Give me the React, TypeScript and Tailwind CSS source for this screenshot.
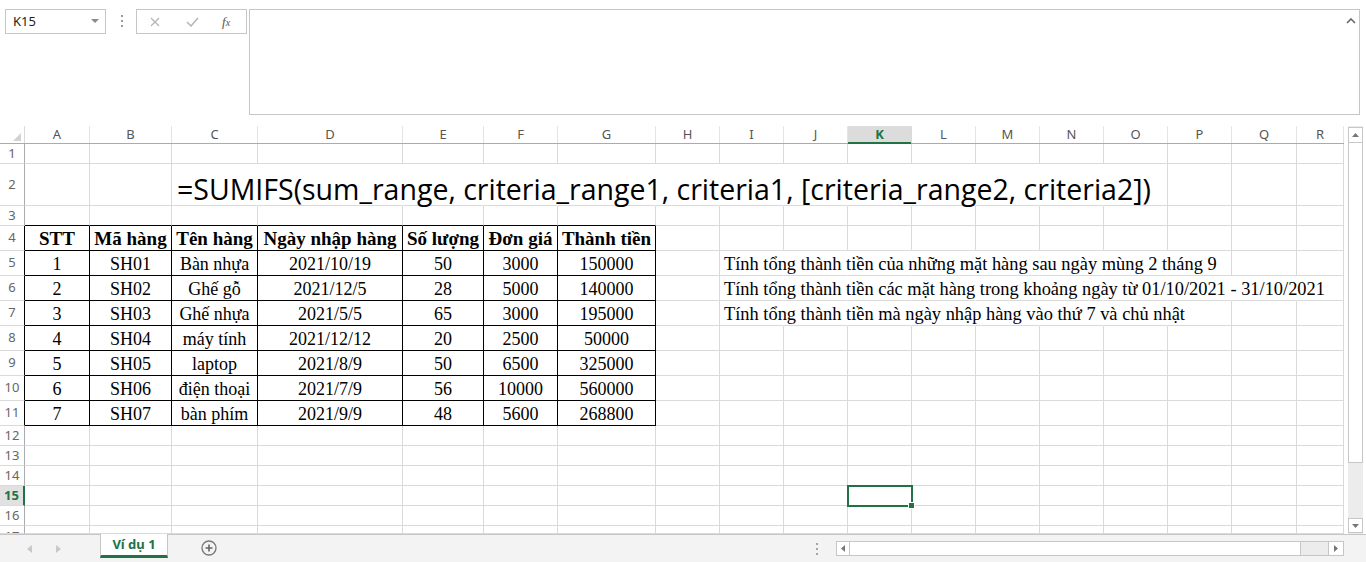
import React from "react";

const COLS: [string, number][] = [
  ["A", 65], ["B", 82], ["C", 86], ["D", 145], ["E", 81], ["F", 74], ["G", 98],
  ["H", 64], ["I", 64], ["J", 64], ["K", 64], ["L", 64], ["M", 64], ["N", 64],
  ["O", 64], ["P", 64], ["Q", 65], ["R", 47],
];
const ROW_H = [20, 42, 20, 25, 25, 25, 25, 25, 25, 25, 25, 20, 20, 20, 20, 20, 8];

const TABLE = [
  ["STT", "Mã hàng", "Tên hàng", "Ngày nhập hàng", "Số lượng", "Đơn giá", "Thành tiền"],
  ["1", "SH01", "Bàn nhựa", "2021/10/19", "50", "3000", "150000"],
  ["2", "SH02", "Ghế gỗ", "2021/12/5", "28", "5000", "140000"],
  ["3", "SH03", "Ghế nhựa", "2021/5/5", "65", "3000", "195000"],
  ["4", "SH04", "máy tính", "2021/12/12", "20", "2500", "50000"],
  ["5", "SH05", "laptop", "2021/8/9", "50", "6500", "325000"],
  ["6", "SH06", "điện thoại", "2021/7/9", "56", "10000", "560000"],
  ["7", "SH07", "bàn phím", "2021/9/9", "48", "5600", "268800"],
];

const NOTES: Record<number, string> = {
  4: "Tính tổng thành tiền của những mặt hàng sau ngày mùng 2 tháng 9",
  5: "Tính tổng thành tiền các mặt hàng trong khoảng ngày từ 01/10/2021 - 31/10/2021",
  6: "Tính tổng thành tiền mà ngày nhập hàng vào thứ 7 và chủ nhật",
};

const HIDE: Record<number, [number, number]> = {
  1: [2, 13],
  4: [8, 14],
  5: [8, 16],
  6: [8, 14],
};

const SEL_ROW = 14;
const SEL_COL = 10;

const SERIF = '"Liberation Serif", "Times New Roman", serif';
const UI = '"Noto Sans", "Open Sans", sans-serif';

function Cell({ r, c, w, h }: { r: number; c: number; w: number; h: number }) {
  const inTable = r >= 3 && r <= 10 && c <= 6;
  const topOfTable = r === 2 && c <= 6;
  const hidden = HIDE[r] && c >= HIDE[r][0] && c <= HIDE[r][1];
  const rightCls = inTable
    ? "border-r-black"
    : hidden
    ? "border-r-transparent"
    : "border-r-[#dadada]";
  const bottomCls = inTable || topOfTable ? "border-b-black" : "border-b-[#dadada]";

  let content: React.ReactNode = null;
  if (inTable) {
    const txt = TABLE[r - 3][c];
    content = (
      <div
        className={
          "w-full text-center whitespace-nowrap leading-[20px] pb-[1px] text-black " +
          (r === 3 ? "font-bold text-[19px]" : "text-[18px]")
        }
        style={{ fontFamily: SERIF }}
      >
        {txt}
      </div>
    );
  } else if (r === 1 && c === 2) {
    content = (
      <div
        className="relative z-10 pl-[5px] pb-[1px] whitespace-nowrap text-[28.5px] leading-[30px] text-black"
        style={{ fontFamily: '"Open Sans", "Noto Sans", sans-serif' }}
      >
        =SUMIFS(sum_range, criteria_range1, criteria1, [criteria_range2, criteria2])
      </div>
    );
  } else if (c === 8 && NOTES[r]) {
    content = (
      <div
        className="relative z-10 pl-[4px] whitespace-nowrap text-[18.4px] leading-[20px] pb-[1px] text-black"
        style={{ fontFamily: SERIF }}
      >
        {NOTES[r]}
      </div>
    );
  }

  const isSel = r === SEL_ROW && c === SEL_COL;

  return (
    <div
      className={"relative flex items-end shrink-0 border-r border-b border-solid " + rightCls + " " + bottomCls}
      style={{ width: w, height: h }}
    >
      {content}
      {isSel && (
        <div className="absolute -left-[1px] -top-[1px] w-[66px] h-[22px] border-2 border-[#217346] z-20">
          <div className="absolute -right-[4px] -bottom-[4px] w-[7px] h-[7px] bg-[#217346] border border-white" />
        </div>
      )}
    </div>
  );
}

function RowHeader({ r, h }: { r: number; h: number }) {
  const sel = r === SEL_ROW;
  const tbl = r >= 3 && r <= 10;
  return (
    <div
      className={
        "w-[25px] shrink-0 flex items-center justify-center overflow-hidden border-b border-[#dadada] text-[13px] " +
        (sel
          ? "bg-[#e1e1e1] text-[#217346] font-bold border-r-2 border-r-[#217346]"
          : tbl
          ? "text-[#666] border-r border-r-black"
          : "text-[#666] border-r border-r-[#ababab]")
      }
      style={{ height: h, fontFamily: UI }}
    >
      <span className={r === 16 ? "mt-[14px]" : ""}>{r + 1}</span>
    </div>
  );
}

function TopBar() {
  return (
    <div className="h-[126px] flex items-start bg-white shrink-0">
      <div className="ml-[5px] mt-[9px] w-[101px] h-[25px] border border-[#c6c6c6] flex items-center justify-between pl-[7px] pr-[6px]">
        <span className="text-[13px] text-[#222]" style={{ fontFamily: UI }}>K15</span>
        <svg width="8" height="5" viewBox="0 0 8 5"><path d="M0 0 L8 0 L4 4 Z" fill="#8a8a8a" /></svg>
      </div>
      <div className="ml-[15px] mt-[15px] flex flex-col gap-[3px]">
        <div className="w-[2px] h-[2px] bg-[#9a9a9a]" />
        <div className="w-[2px] h-[2px] bg-[#9a9a9a]" />
        <div className="w-[2px] h-[2px] bg-[#9a9a9a]" />
      </div>
      <div className="ml-[13px] mt-[9px] w-[111px] h-[25px] border border-[#c6c6c6] flex items-center">
        <svg className="ml-[13px]" width="10" height="10" viewBox="0 0 10 10">
          <path d="M1 1 L9 9 M9 1 L1 9" stroke="#b5b5b5" strokeWidth="1.3" />
        </svg>
        <svg className="ml-[26px]" width="13" height="10" viewBox="0 0 13 10">
          <path d="M1 5 L5 9 L12 1" stroke="#b5b5b5" strokeWidth="1.5" fill="none" />
        </svg>
        <span className="ml-[23px] italic text-[13px] text-[#555]" style={{ fontFamily: SERIF }}>
          f<span className="text-[10px]">x</span>
        </span>
      </div>
      <div className="ml-[2px] mt-[9px] w-[1111px] h-[106px] border border-[#c6c6c6] flex justify-end">
        <svg className="mt-[8px] mr-[3px]" width="10" height="6" viewBox="0 0 10 6">
          <path d="M1 5 L5 1 L9 5" stroke="#666" strokeWidth="1.6" fill="none" />
        </svg>
      </div>
    </div>
  );
}

function ColHeader() {
  return (
    <div className="h-[18px] flex shrink-0 border-b border-[#ababab] bg-white">
      <div className="w-[25px] shrink-0 border-r border-[#dadada] flex items-end justify-end pr-[3px] pb-[2px]">
        <svg width="8" height="8" viewBox="0 0 8 8"><path d="M8 0 L8 8 L0 8 Z" fill="#d2d2d2" /></svg>
      </div>
      {COLS.map(([l, w], i) => {
        const sel = i === SEL_COL;
        return (
          <div
            key={l}
            className={
              "relative shrink-0 flex items-center justify-center text-[13px] leading-[17px] border-r " +
              (sel ? "bg-[#dcdcdc] text-[#217346] font-bold border-r-[#dadada]" : "text-[#555] border-r-[#e4e4e4]")
            }
            style={{ width: w, fontFamily: UI }}
          >
            {l}
            {sel && <div className="absolute left-0 right-0 -bottom-[1px] h-[2px] bg-[#217346]" />}
          </div>
        );
      })}
    </div>
  );
}

function VScroll() {
  return (
    <div className="w-[22px] shrink-0 bg-white flex justify-start pl-[4px]">
      <div className="w-[15px] h-full flex flex-col bg-[#ececec]">
        <div className="h-[16px] mt-[1px] bg-white border border-[#c6c6c6] flex items-center justify-center">
          <svg width="7" height="4" viewBox="0 0 7 4"><path d="M0 4 L3.5 0 L7 4 Z" fill="#777" /></svg>
        </div>
        <div className="h-[320px] bg-white border border-t-0 border-[#c6c6c6]" />
        <div className="flex-1" />
        <div className="h-[15px] mb-[1px] bg-white border border-[#c6c6c6] flex items-center justify-center">
          <svg width="7" height="4" viewBox="0 0 7 4"><path d="M0 0 L7 0 L3.5 4 Z" fill="#777" /></svg>
        </div>
      </div>
    </div>
  );
}

function BottomBar() {
  return (
    <div className="h-[28px] shrink-0 bg-[#f3f3f3] border-t border-[#c6c6c6] flex items-start">
      <svg className="ml-[27px] mt-[10px]" width="5" height="8" viewBox="0 0 5 8"><path d="M5 0 L0 4 L5 8 Z" fill="#c8c8c8" /></svg>
      <svg className="ml-[24px] mt-[10px]" width="5" height="8" viewBox="0 0 5 8"><path d="M0 0 L5 4 L0 8 Z" fill="#c8c8c8" /></svg>
      <div className="ml-[39px] -mt-[1px] w-[68px] h-[24px] bg-white border-x border-[#c6c6c6] border-b-[3px] border-b-[#217346] flex items-center justify-center">
        <span className="text-[13px] font-bold text-[#217346]" style={{ fontFamily: UI }}>
          Ví dụ 1
        </span>
      </div>
      <svg className="ml-[33px] mt-[5px]" width="16" height="16" viewBox="0 0 16 16">
        <circle cx="8" cy="8" r="7" stroke="#777" strokeWidth="1.3" fill="none" />
        <path d="M8 4.5 V11.5 M4.5 8 H11.5" stroke="#666" strokeWidth="1.6" />
      </svg>
      <div className="ml-[599px] mt-[8px] flex flex-col gap-[3px]">
        <div className="w-[2px] h-[2px] bg-[#a5a5a5]" />
        <div className="w-[2px] h-[2px] bg-[#a5a5a5]" />
        <div className="w-[2px] h-[2px] bg-[#a5a5a5]" />
      </div>
      <div className="ml-[18px] mt-[6px] w-[508px] h-[15px] border border-[#c6c6c6] bg-[#ececec] flex">
        <div className="w-[13px] bg-white flex items-center justify-center border-r border-[#c6c6c6]">
          <svg width="4" height="7" viewBox="0 0 4 7"><path d="M4 0 L0 3.5 L4 7 Z" fill="#777" /></svg>
        </div>
        <div className="w-[451px] bg-white border-r border-[#c6c6c6]" />
        <div className="flex-1" />
        <div className="w-[15px] bg-white flex items-center justify-center border-l border-[#c6c6c6]">
          <svg width="4" height="7" viewBox="0 0 4 7"><path d="M0 0 L4 3.5 L0 7 Z" fill="#777" /></svg>
        </div>
      </div>
    </div>
  );
}

export default function App() {
  return (
    <div className="w-[1366px] h-[562px] overflow-hidden bg-white flex flex-col">
      <TopBar />
      <div className="h-[408px] flex shrink-0 overflow-hidden">
        <div className="w-[1344px] shrink-0 flex flex-col">
          <ColHeader />
          {ROW_H.map((h, r) => (
            <div key={r} className="flex shrink-0" style={{ height: h }}>
              <RowHeader r={r} h={h} />
              {COLS.map(([l, w], c) => (
                <Cell key={l} r={r} c={c} w={w} h={h} />
              ))}
            </div>
          ))}
        </div>
        <VScroll />
      </div>
      <BottomBar />
    </div>
  );
}
